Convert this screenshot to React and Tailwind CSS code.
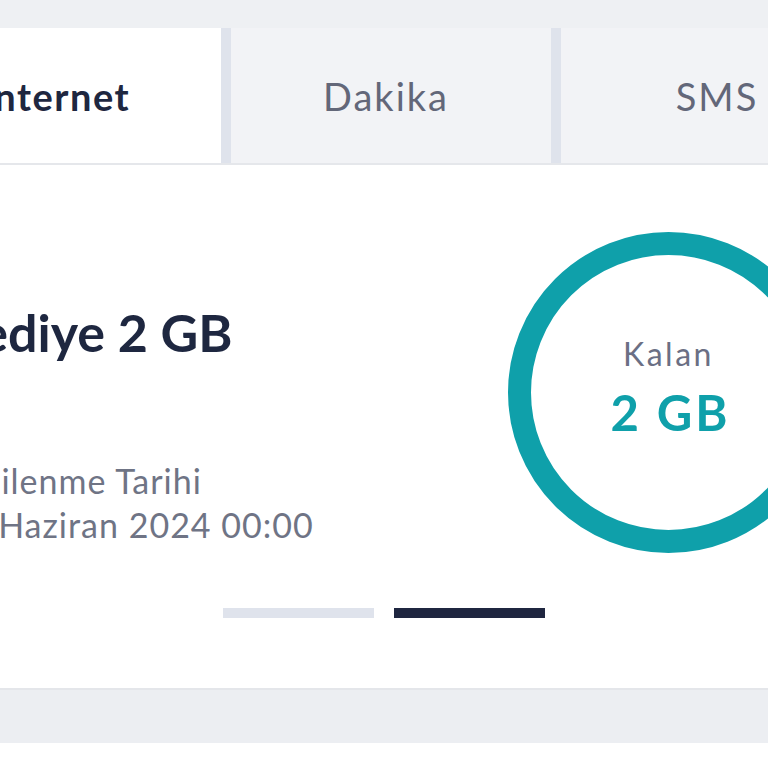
import React from "react";

export default function App() {
  const font = { fontFamily: "Lato, 'Open Sans', sans-serif" };
  return (
    <div className="w-[768px] h-[768px] overflow-hidden bg-white" style={font}>
      <div className="h-[28px] bg-[#eef0f3]" />
      <div className="flex ml-[-99px] w-[990px] h-[137px] border-b-2 border-[#e5e7eb]">
        <div className="w-[320px] shrink-0 bg-white flex items-center justify-center pt-[2px] pr-[10px] text-[38px] tracking-[1.5px] font-bold text-[#1e2740]">
          Internet
        </div>
        <div className="w-[10px] shrink-0 bg-[#dfe3ec]" />
        <div className="w-[320px] shrink-0 bg-[#f2f3f6] flex items-center justify-center pt-[2px] pr-[10px] text-[38px] tracking-[2px] text-[#636779]">
          Dakika
        </div>
        <div className="w-[10px] shrink-0 bg-[#dfe3ec]" />
        <div className="w-[320px] shrink-0 bg-[#f2f3f6] flex items-center justify-center pt-[2px] pr-[8px] text-[38px] tracking-[2px] text-[#636779]">
          SMS
        </div>
      </div>
      <div className="h-[523px] flex flex-col">
        <div className="flex">
          <div className="w-[568px] shrink-0 ml-[-60px] flex flex-col">
            <div className="mt-[141px] ml-[1px] text-[52px] leading-[1] font-bold text-[#1e2740] whitespace-nowrap">
              Hediye 2 GB
            </div>
            <div className="mt-[101px] ml-[7px] text-[34px] leading-[44px] tracking-[1px] text-[#6f7485] whitespace-nowrap">
              <div className="ml-[-3px]">Yenilenme Tarihi</div>
              <div>30 Haziran 2024 00:00</div>
            </div>
          </div>
          <div className="mt-[67px] shrink-0 w-[321px] h-[321px] rounded-full border-[23px] border-[#0fa0aa] flex flex-col items-center pt-[80px]">
            <div className="text-[32px] leading-[1.2] tracking-[2.5px] text-[#6b6f84]">Kalan</div>
            <div className="text-[49px] leading-[1.2] tracking-[3px] font-bold text-[#0fa0aa] mt-[10px] ml-[4px]">2 GB</div>
          </div>
        </div>
        <div className="flex justify-center gap-[20px] mt-[55px]">
          <div className="w-[151px] h-[10px] bg-[#dfe3ec]" />
          <div className="w-[151px] h-[10px] bg-[#1f2640]" />
        </div>
      </div>
      <div className="h-[55px] bg-[#eceef2] border-t-2 border-[#e4e6ea]" />
    </div>
  );
}
